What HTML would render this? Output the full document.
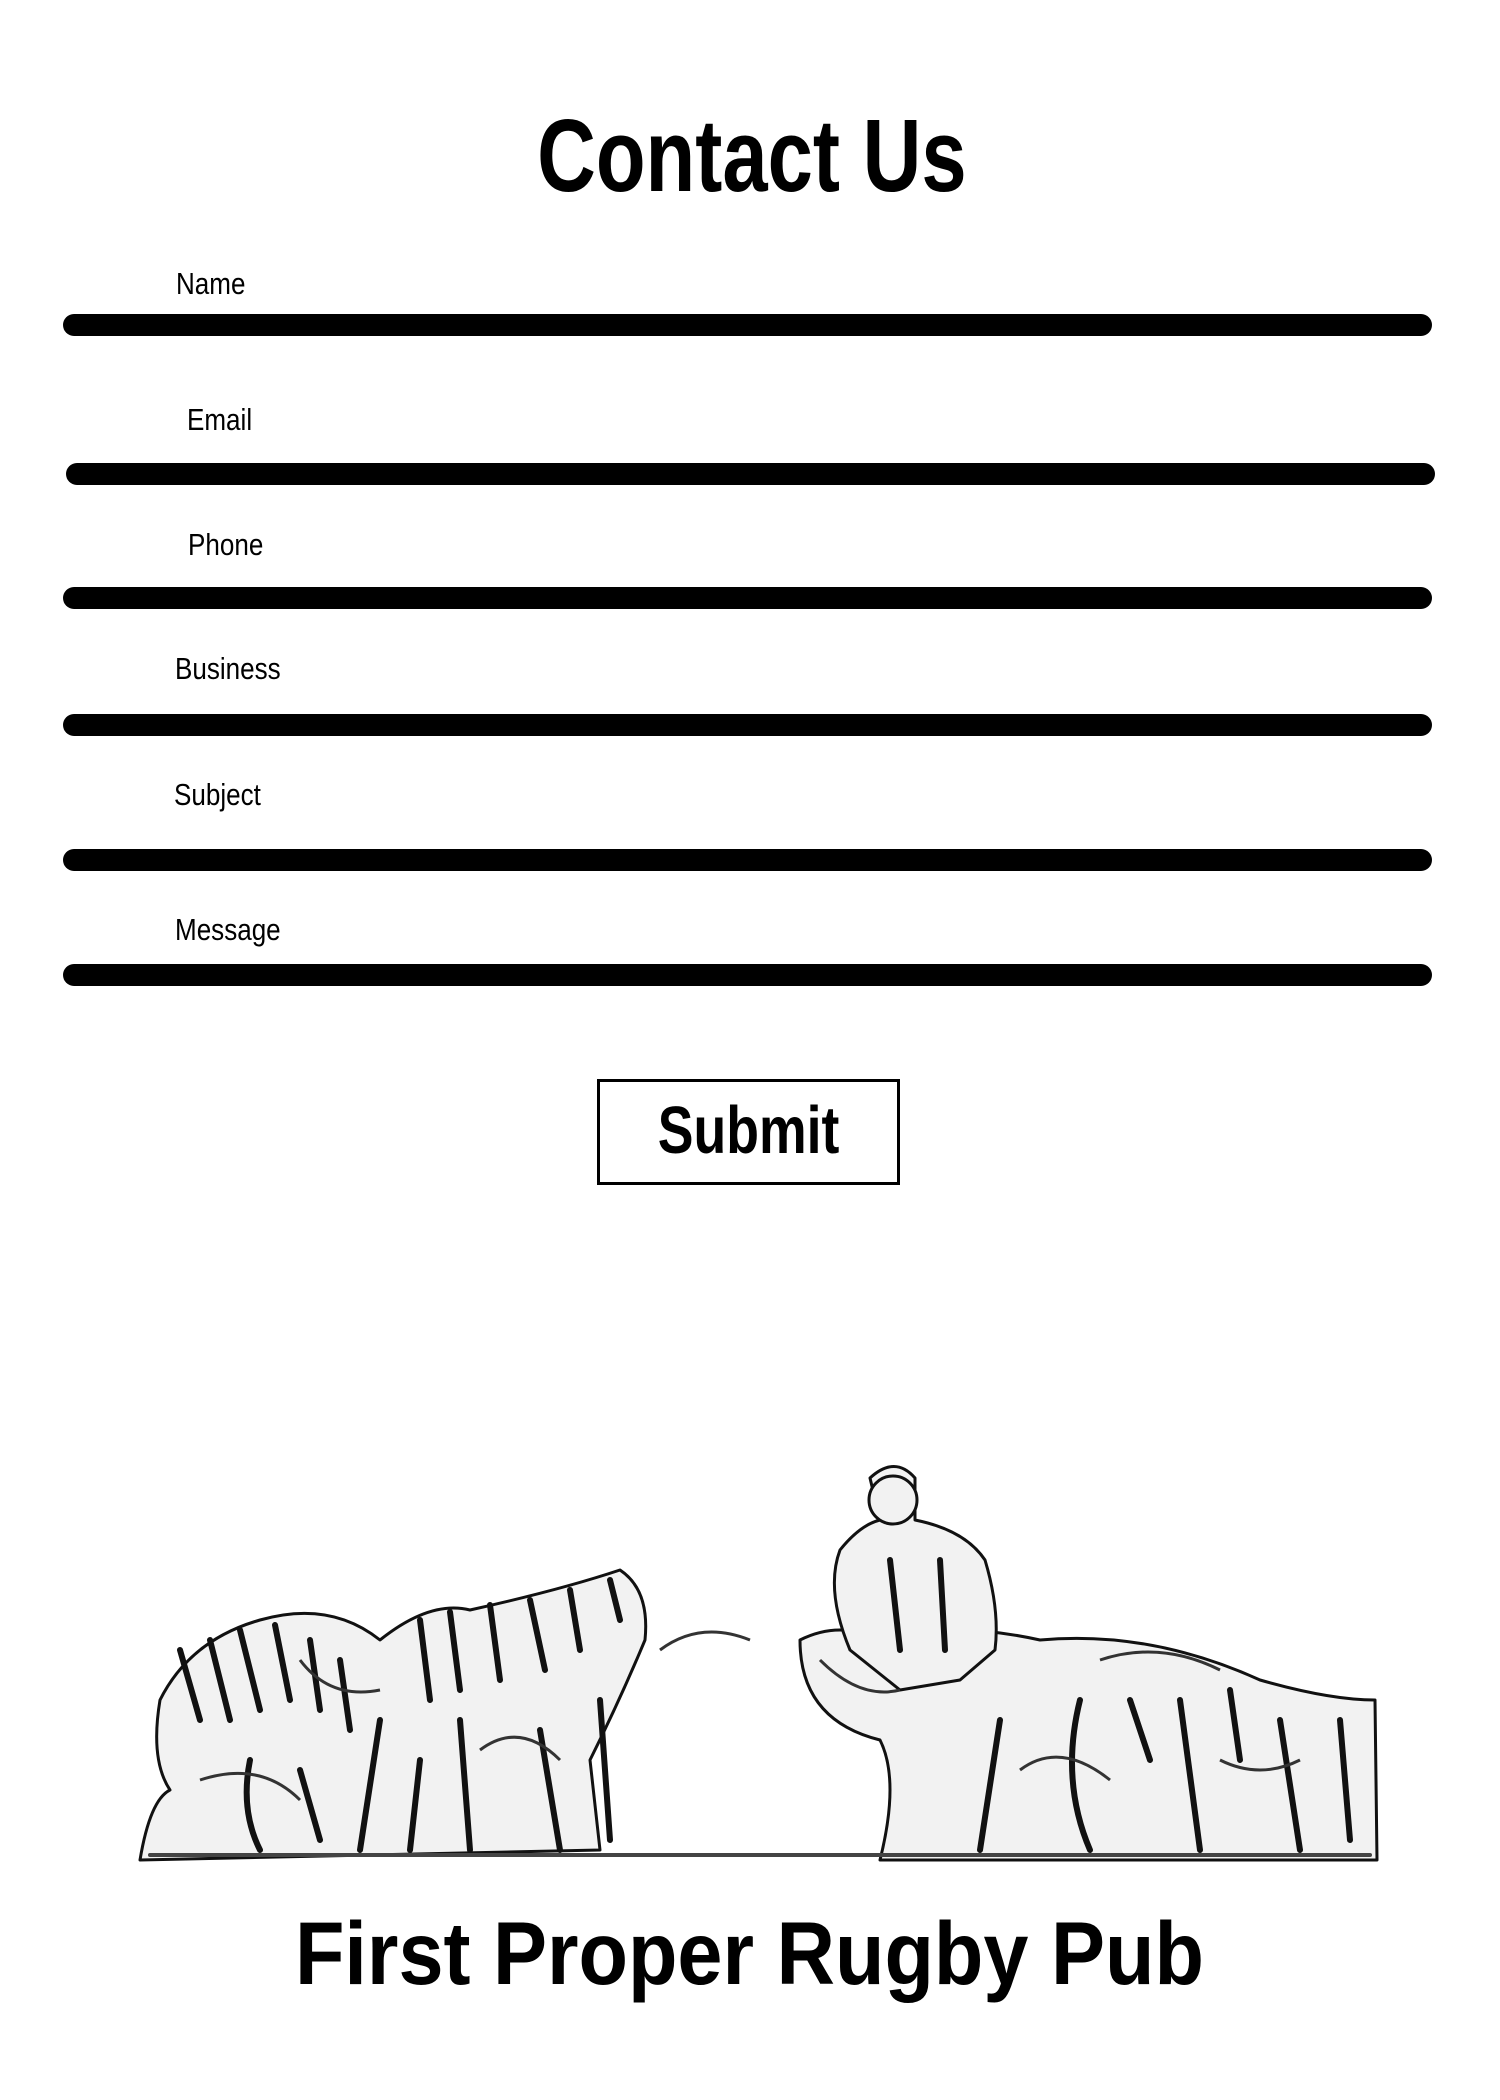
<!DOCTYPE html>
<html><head><meta charset="utf-8"><style>
html,body{margin:0;padding:0;background:#fff;}
body{width:1500px;height:2100px;position:relative;overflow:hidden;font-family:"Liberation Sans Narrow","Liberation Sans",sans-serif;color:#000;}
.t{position:absolute;white-space:nowrap;line-height:1;}
.c{text-align:center;}
.c span{display:inline-block;}
.bar{position:absolute;height:22px;background:#000;border-radius:11px;}
.lab{font-size:31px;transform:scaleX(0.84);transform-origin:left center;}
</style></head><body>
<div class="t c" style="left:0;width:1503px;top:104px;font-size:103px;font-weight:bold;"><span style="transform:scaleX(0.79)">Contact Us</span></div>

<div class="t lab" style="left:176px;top:268px;">Name</div>
<div class="bar" style="left:63px;top:314px;width:1369px;"></div>
<div class="t lab" style="left:187px;top:404px;">Email</div>
<div class="bar" style="left:66px;top:463px;width:1369px;"></div>
<div class="t lab" style="left:188px;top:529px;">Phone</div>
<div class="bar" style="left:63px;top:587px;width:1369px;"></div>
<div class="t lab" style="left:175px;top:653px;">Business</div>
<div class="bar" style="left:63px;top:714px;width:1369px;"></div>
<div class="t lab" style="left:174px;top:779px;">Subject</div>
<div class="bar" style="left:63px;top:849px;width:1369px;"></div>
<div class="t lab" style="left:175px;top:914px;">Message</div>
<div class="bar" style="left:63px;top:964px;width:1369px;"></div>

<div style="position:absolute;left:597px;top:1079px;width:297px;height:100px;border:3px solid #000;"></div>
<div class="t c" style="left:597px;top:1097px;width:303px;font-size:67px;font-weight:bold;"><span style="transform:scaleX(0.8)">Submit</span></div>

<svg style="position:absolute;left:0;top:0" width="1500" height="2100" viewBox="0 0 1500 2100">
<g fill="#f2f2f2" stroke="#111" stroke-width="3" stroke-linejoin="round">
<path d="M160 1700 Q190 1640 260 1620 Q330 1600 380 1640 Q430 1600 470 1610 Q560 1590 620 1570 Q650 1590 645 1640 Q620 1700 590 1760 L600 1850 L140 1860 Q150 1800 170 1790 Q150 1760 160 1700 Z"/>
<path d="M800 1640 Q840 1620 880 1640 Q950 1620 1040 1640 Q1150 1630 1260 1680 Q1330 1700 1375 1700 L1377 1860 L880 1860 Q900 1780 880 1740 Q800 1720 800 1640 Z"/>
<path d="M870 1478 Q895 1455 915 1478 L915 1520 Q965 1530 985 1560 Q1000 1610 995 1650 L960 1680 L900 1690 L850 1650 Q825 1590 840 1550 Q860 1525 880 1520 Z"/>
<circle cx="893" cy="1500" r="24"/>
</g>
<g stroke="#111" stroke-width="6" fill="none" stroke-linecap="round">
<path d="M180 1650 L200 1720 M210 1640 L230 1720 M240 1630 L260 1710 M275 1625 L290 1700 M310 1640 L320 1710 M340 1660 L350 1730 M420 1620 L430 1700 M450 1612 L460 1690 M490 1605 L500 1680 M530 1600 L545 1670 M570 1590 L580 1650 M610 1580 L620 1620"/>
<path d="M250 1760 Q240 1810 260 1850 M380 1720 L360 1850 M460 1720 L470 1850 M540 1730 L560 1850 M600 1700 L610 1840 M300 1770 L320 1840 M420 1760 L410 1850"/>
<path d="M890 1560 L900 1650 M940 1560 L945 1650 M1000 1720 L980 1850 M1080 1700 Q1060 1780 1090 1850 M1180 1700 L1200 1850 M1280 1720 L1300 1850 M1340 1720 L1350 1840 M1130 1700 L1150 1760 M1230 1690 L1240 1760"/>
<path d="M150 1855 L1370 1855" stroke-width="4" stroke="#444"/>
</g>
<g stroke="#333" stroke-width="3" fill="none">
<path d="M200 1780 Q260 1760 300 1800 M300 1660 Q330 1700 380 1690 M660 1650 Q700 1620 750 1640 M820 1660 Q860 1700 900 1690 M1100 1660 Q1160 1640 1220 1670 M1220 1760 Q1260 1780 1300 1760 M480 1750 Q520 1720 560 1760 M1020 1770 Q1060 1740 1110 1780"/>
</g>
</svg>

<div class="t c" style="left:0;width:1498px;top:1909px;font-size:89px;font-weight:bold;"><span style="transform:scaleX(0.91)">First Proper Rugby Pub</span></div>
</body></html>
